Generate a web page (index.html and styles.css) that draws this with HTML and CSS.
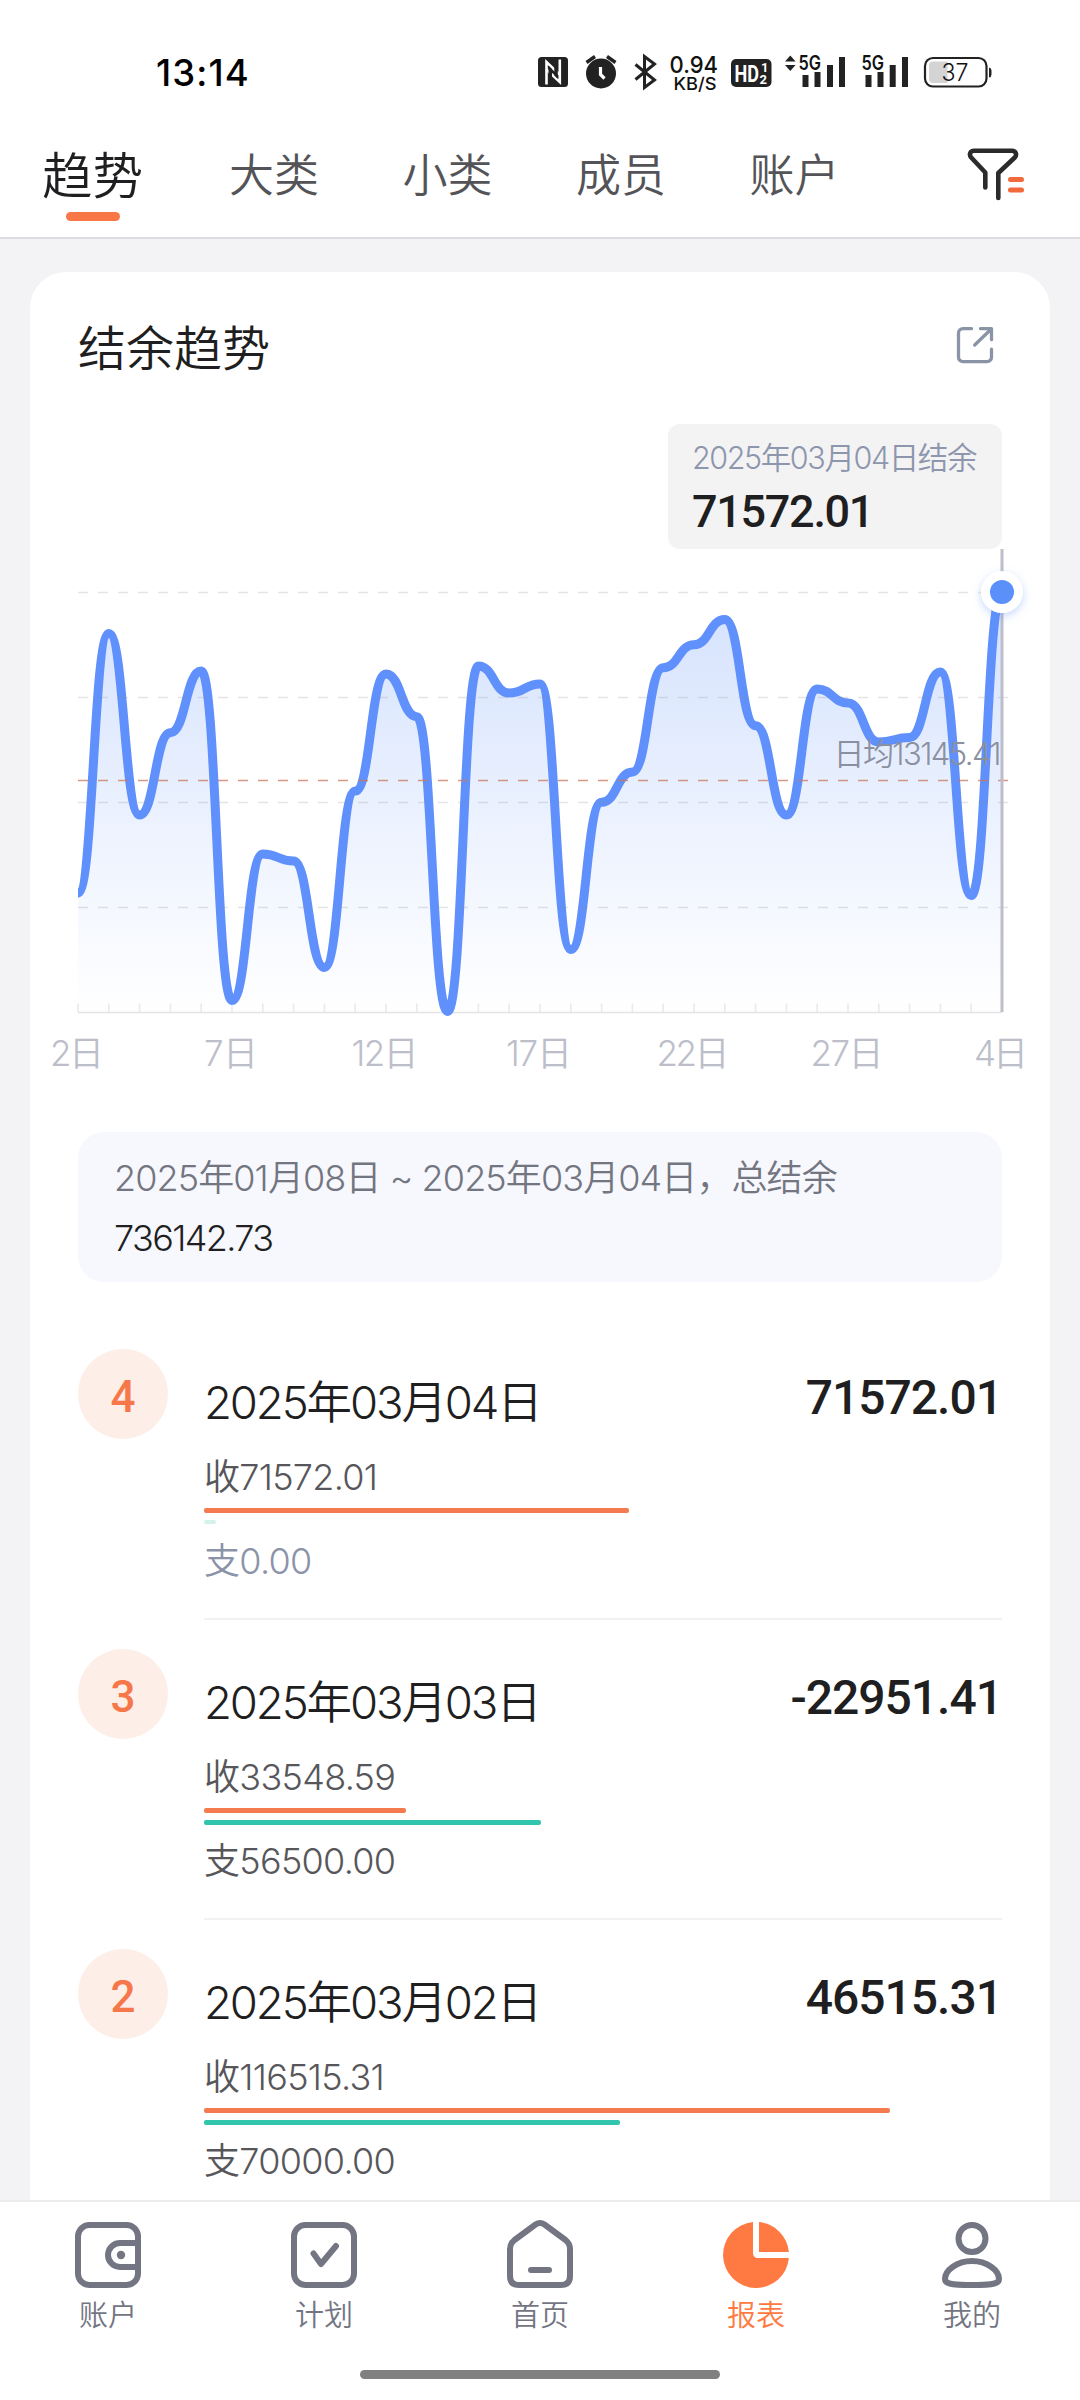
FILE: index.html
```html
<!DOCTYPE html>
<html lang="zh-CN">
<head>
<meta charset="utf-8">
<title>结余趋势</title>
<link rel="stylesheet" href="styles.css">
</head>
<body>
<div class="app">
  <header class="header">
    <div class="status">
      <span class="clock">13:14</span>
      <svg class="status-icons" width="456" height="44" viewBox="536 50 456 44">
        <g fill="#222">
          <rect x="538" y="57" width="30" height="30" rx="3.500"/>
          <path d="M546.500 84.500V62L559.500 74.500" fill="none" stroke="#fff" stroke-width="2.600"/>
          <path d="M559.800 59.500V82L546.500 69.500" fill="none" stroke="#fff" stroke-width="2.600"/>
          <path d="M548.500 65.500l3.500 3.500v14l-3.500 2zM557.800 79l-3.500-3.500v-14l3.500-2z"/>
          <circle cx="601" cy="73.500" r="15"/>
          <path d="M586.500 62.500l8.500-6M615.500 62.500l-8.500-6" stroke="#222" stroke-width="3.400"/>
          <path d="M600.500 67v7.500l4 4" fill="none" stroke="#fff" stroke-width="3.200"/>
          <path d="M635.500 64.500l19 15.500-10 7.500V56.500l10 7.500-19 15.500" fill="none" stroke="#222" stroke-width="3"/>
          <rect x="731" y="59" width="40.500" height="28" rx="5"/>
          <path d="M785 61.500l5.300-6 5.300 6zM785 65l5.300 6 5.300-6z"/>
          <path d="M802.500 75h6v12h-6zM814.500 72h6v15h-6zM827 65h6v22h-6zM839 57h6v30h-6z"/>
          <path d="M865.500 75h6v12h-6zM877.500 72h6v15h-6zM889.700 65h6v22h-6zM902 57h6v30h-6z"/>
          <path d="M989 67.500a3 3 0 0 1 2.500 3v4a3 3 0 0 1-2.500 3z"/>
        </g>
        <path d="M933 61.500h14.500v21.500H933a4 4 0 0 1-4-4V65.500a4 4 0 0 1 4-4z" fill="#d4d4d4"/>
        <rect x="925" y="58" width="61.500" height="28.500" rx="8" fill="none" stroke="#222" stroke-width="2.200"/>
        <g class="status-text">
          <text x="669.500" y="73" font-size="23.500" textLength="48.500" lengthAdjust="spacingAndGlyphs">0.94</text>
          <text x="673.500" y="90" font-size="17.500" textLength="43" lengthAdjust="spacingAndGlyphs">KB/S</text>
          <text class="on-dark" x="734.500" y="81.500" font-size="23" textLength="24.500" lengthAdjust="spacingAndGlyphs">HD</text>
          <text class="on-dark" x="761" y="71.500" font-size="13">1</text>
          <text class="on-dark" x="759.500" y="84" font-size="13">2</text>
          <text x="798.500" y="70" font-size="20" font-weight="600" textLength="22.500" lengthAdjust="spacingAndGlyphs">5G</text>
          <text x="861.500" y="70" font-size="20" font-weight="600" textLength="22.500" lengthAdjust="spacingAndGlyphs">5G</text>
          <text x="941.500" y="81" font-size="24" font-weight="350" textLength="27" lengthAdjust="spacingAndGlyphs">37</text>
        </g>
      </svg>
    </div>
    <nav class="tabs">
      <span class="tab tab-active">趋势</span>
      <span class="tab">大类</span>
      <span class="tab">小类</span>
      <span class="tab">成员</span>
      <span class="tab">账户</span>
      <svg class="filter" width="60" height="56" viewBox="966 147 60 56" fill="none" stroke-width="4.600" stroke-linecap="round" stroke-linejoin="round">
        <path d="M985.300 188.500V173.500L971.200 158.500c-2.500-3-1-6.700 2.800-6.700h38c3.800 0 5.300 3.700 2.800 6.700L998.300 174v25" stroke="#2b2b2d"/>
        <path d="M1010.500 180.500h11M1010.500 191h11" stroke="#f2693c" stroke-width="5"/>
      </svg>
    </nav>
  </header>

  <main class="main">
    <section class="card">
      <div class="card-head">
        <h1 class="title">结余趋势</h1>
        <svg width="38" height="38" viewBox="956 326 38 38" fill="none" stroke="#8a94a6" stroke-width="3.300" stroke-linecap="round" stroke-linejoin="round">
          <path d="M971.500 328.700H963a4.500 4.500 0 0 0-4.500 4.500v24a4.500 4.500 0 0 0 4.500 4.500h24a4.500 4.500 0 0 0 4.500-4.500v-8M980.500 328.700h11v11M991 329.200l-16.300 15.800"/>
        </svg>
      </div>
      <div class="tooltip">
        <div class="tooltip-label">2025年03月04日结余</div>
        <div class="tooltip-value">71572.01</div>
      </div>
      <svg class="chart" width="1020" height="583" viewBox="30 549 1020 583">
        <defs>
          <linearGradient id="area" x1="0" y1="592" x2="0" y2="1012" gradientUnits="userSpaceOnUse">
            <stop offset="0" stop-color="#5b8ff9" stop-opacity=".26"/>
            <stop offset="1" stop-color="#5b8ff9" stop-opacity="0"/>
          </linearGradient>
          <clipPath id="plot"><rect x="78" y="540" width="924" height="500"/></clipPath>
          <filter id="glow" x="-60%" y="-60%" width="220%" height="220%">
            <feDropShadow dx="0" dy="3" stdDeviation="4" flood-color="#5b8ff9" flood-opacity=".35"/>
          </filter>
        </defs>
        <path d="M78 1012.500H1002" stroke="#e4e4e7" stroke-width="1.500"/>
        <path id="ticks" stroke="#e9e9ee" stroke-width="1.500"/>
        <g clip-path="url(#plot)">
          <path id="areaPath" fill="url(#area)"/>
          <path id="linePath" fill="none" stroke="#5f90fb" stroke-width="9"/>
        </g>
        <path d="M78 592.500H1009M78 697.500H1009M78 802.500H1009M78 907.500H1009" stroke="#8c8c94" stroke-opacity=".23" stroke-width="1.600" stroke-dasharray="10 10"/>
        <path d="M78 780.500H1009" stroke="#c9775f" stroke-opacity=".75" stroke-width="1.300" stroke-dasharray="10 10"/>
        <text class="avg" x="833.500" y="764.500" textLength="168" lengthAdjust="spacing">日均13145.41</text>
        <path d="M1002 549V1012" stroke="#bdbec9" stroke-width="3"/>
        <circle cx="1002" cy="592" r="21" fill="#fff" filter="url(#glow)"/>
        <circle cx="1002" cy="592" r="12" fill="#5b8ff9"/>
        <g class="axis" id="axis"></g>
      </svg>
      <div class="summary">
        <div>2025年01月08日 ~ 2025年03月04日，总结余</div>
        <div class="summary-total">736142.73</div>
      </div>

      <ul class="list">
        <li class="row">
          <span class="day">4</span>
          <div class="body">
            <div class="line"><span class="date">2025年03月04日</span><span class="amount">71572.01</span></div>
            <div class="in">收71572.01</div>
            <div class="bar bar-in" style="width:425px"></div>
            <div class="bar bar-none" style="width:12px"></div>
            <div class="out out-zero">支0.00</div>
          </div>
        </li>
        <li class="row">
          <span class="day">3</span>
          <div class="body">
            <div class="line"><span class="date">2025年03月03日</span><span class="amount">-22951.41</span></div>
            <div class="in">收33548.59</div>
            <div class="bar bar-in" style="width:202px"></div>
            <div class="bar bar-out" style="width:337px"></div>
            <div class="out">支56500.00</div>
          </div>
        </li>
        <li class="row">
          <span class="day">2</span>
          <div class="body">
            <div class="line"><span class="date">2025年03月02日</span><span class="amount">46515.31</span></div>
            <div class="in">收116515.31</div>
            <div class="bar bar-in" style="width:686px"></div>
            <div class="bar bar-out" style="width:416px"></div>
            <div class="out">支70000.00</div>
          </div>
        </li>
      </ul>
    </section>
  </main>

  <footer class="footer">
    <nav class="nav">
      <div class="item">
        <svg width="72" height="72" viewBox="72 2218 72 72" fill="none" stroke="#737583" stroke-width="6">
          <rect x="78" y="2224" width="60" height="60" rx="11.500"/>
          <path d="M138 2242H120a12 12 0 0 0 0 24H138"/>
          <circle cx="121" cy="2254" r="4.200" fill="#737583" stroke="none"/>
        </svg>
        <span>账户</span>
      </div>
      <div class="item">
        <svg width="72" height="72" viewBox="288 2218 72 72" fill="none" stroke="#737583" stroke-width="6" stroke-linecap="round" stroke-linejoin="round">
          <rect x="294" y="2224" width="60" height="60" rx="11.500"/>
          <path d="M313.500 2252.500l7.500 10.500 15-18"/>
        </svg>
        <span>计划</span>
      </div>
      <div class="item">
        <svg width="72" height="72" viewBox="504 2218 72 72" fill="none" stroke="#737583" stroke-width="6" stroke-linecap="round">
          <path d="M535.500 2223.500q4.500-3 9 0l21 15.500q4.500 3.500 4.500 9V2275q0 9-9 9H519q-9 0-9-9V2248q0-5.500 4.500-9z"/>
          <path d="M531 2269h18"/>
        </svg>
        <span>首页</span>
      </div>
      <div class="item item-active">
        <svg width="72" height="72" viewBox="720 2218 72 72" fill="#ff7a42">
          <path d="M753 2221.100A33 33 0 1 0 788.900 2257H758q-5 0-5-5z"/>
          <path d="M759 2221.100V2251H788.900A33 33 0 0 0 759 2221.100z"/>
        </svg>
        <span>报表</span>
      </div>
      <div class="item">
        <svg width="72" height="72" viewBox="936 2218 72 72" fill="none" stroke="#737583" stroke-width="6">
          <circle cx="972" cy="2237.500" r="13.500"/>
          <path d="M972 2260c-15 0-27 9.500-27 18 0 4 3.500 6 27 6s27-2 27-6c0-8.500-12-18-27-18z"/>
        </svg>
        <span>我的</span>
      </div>
    </nav>
    <div class="home-bar"></div>
  </footer>
</div>
<script src="chart.js"></script>
</body>
</html>
```
FILE: styles.css
```css
* { box-sizing: border-box; }

body {
  margin: 0;
  font-family: Inter, "Noto Sans CJK SC", sans-serif;
  font-weight: 350;
  color: #1f1f21;
  background: #f3f3f6;
}

.app {
  width: 1080px;
  height: 2400px;
  display: flex;
  flex-direction: column;
  overflow: hidden;
}

.header {
  flex: none;
  height: 239px;
  background: #fff;
  border-bottom: 2px solid #dcdde1;
}

.status {
  height: 145px;
  padding: 50px 88px 0 156px;
  display: flex;
  justify-content: space-between;
}

.clock {
  font-size: 36.5px;
  font-weight: 500;
  line-height: 46px;
  color: #000;
  letter-spacing: 1.1px;
}

.status-icons { overflow: visible; }

.status-text { font-weight: 500; fill: #111; }

.on-dark {
  font-family: Roboto, sans-serif;
  font-weight: 700;
  fill: #fff;
}

.tabs {
  display: flex;
  align-items: center;
  height: 58px;
  padding: 0 54px 0 42px;
}

.tab {
  font-size: 45px;
  line-height: 54px;
  padding-top: 4px;
  color: #545458;
  margin-right: 83.500px;
}

.tab-active {
  position: relative;
  font-size: 50.5px;
  color: #1f1f21;
  margin-right: 86px;
}

.tab-active::after {
  content: "";
  position: absolute;
  left: 24px;
  top: 67px;
  width: 54px;
  height: 9px;
  border-radius: 5px;
  background: #f97746;
}

.filter { margin-left: auto; }

.main {
  flex: 1;
  min-height: 0;
  overflow: hidden;
  padding: 33px 30px 0;
}

.card {
  background: #fff;
  border-radius: 36px 36px 0 0;
  height: 2000px;
}

.card-head {
  display: flex;
  justify-content: space-between;
  height: 152px;
  padding: 54px 56px 0 48px;
}

.title {
  margin: 0;
  font-size: 48px;
  line-height: 46px;
  font-weight: 350;
}

.tooltip {
  width: 334px;
  height: 125px;
  margin-left: auto;
  margin-right: 48px;
  padding: 14px 0 0 24px;
  border-radius: 12px;
  background: #f3f3f4;
}

.tooltip-label {
  font-size: 30.5px;
  line-height: 40px;
  letter-spacing: -1.4px;
  color: #8d96ad;
  white-space: nowrap;
}

.tooltip-value,
.amount,
.day {
  font-family: Roboto, sans-serif;
  font-weight: 500;
}

.tooltip-value {
  font-size: 45px;
  line-height: 68px;
  letter-spacing: -1.3px;
}

.chart { display: block; }

.avg { font-size: 31px; fill: #8b90a0; }

.axis { font-size: 35px; fill: #bcbeca; }

.summary {
  height: 150px;
  margin: 0 48px;
  padding: 16px 36px 0;
  border-radius: 26px;
  background: #f7f8fd;
  font-size: 36px;
  line-height: 60px;
  letter-spacing: -0.9px;
  color: #737580;
  white-space: nowrap;
}

.summary-total {
  color: #1f1f21;
  letter-spacing: -1.6px;
}

.list {
  list-style: none;
  margin: 38px 0 0;
  padding: 0 48px;
}

.row {
  display: flex;
  height: 300px;
}

.day {
  flex: none;
  width: 90px;
  height: 90px;
  margin: 29px 36px 0 0;
  border-radius: 50%;
  background: #feeee8;
  color: #f5774a;
  font-size: 44px;
  line-height: 97px;
  text-align: center;
}

.body {
  flex: 1;
  padding-top: 48px;
  border-bottom: 2px solid #f2f2f4;
}

.line {
  display: flex;
  justify-content: space-between;
  height: 70px;
}

.date {
  font-size: 45.5px;
  line-height: 69px;
  letter-spacing: -2.1px;
}

.amount {
  font-size: 48px;
  line-height: 60px;
  letter-spacing: -1px;
}

.in,
.out {
  font-size: 36px;
  line-height: 50px;
  letter-spacing: -0.7px;
  color: #57575b;
}

.in { height: 70px; padding-top: 14px; }

.out { padding-top: 4px; }

.out-zero { color: #8a93a8; }

.bar {
  height: 5px;
  border-radius: 2px;
  margin-bottom: 7px;
}

.bar-in { background: #f47a50; }
.bar-out { background: #32c5ad; }
.bar-none { background: #d3f2ec; height: 4px; margin-bottom: 8px; }

.footer {
  flex: none;
  height: 200px;
  border-top: 2px solid #ececef;
  background: #fff;
}

.nav {
  display: grid;
  grid-template-columns: repeat(5, 1fr);
  height: 168px;
  padding-top: 17px;
}

.item {
  display: flex;
  flex-direction: column;
  align-items: center;
  font-size: 29px;
  line-height: 46px;
  color: #737583;
}

.item svg { flex: none; margin-bottom: 2px; }

.item-active { color: #ff7a42; }

.home-bar {
  width: 360px;
  height: 9px;
  margin: 0 auto;
  border-radius: 5px;
  background: #808080;
}
```
FILE: chart.js
```js
const LEFT = 78, STEP = 30.8, BASE = 1012;
const ys = [893, 633.5, 815, 732.7, 671, 1000.5, 854, 861, 967.5, 791, 674, 716.7,
  1011.5, 666, 693, 684, 949.5, 802.3, 772, 667.7, 644.7, 619.5, 725.7, 815,
  689, 703, 742, 737.5, 672, 895.5, 592];
const px = i => LEFT + i * STEP;

// Horizontal bezier between neighbouring days
let d = `M${px(0)} ${ys[0]}`;
for (let i = 1; i < ys.length; i++) {
  const mid = (px(i - 1) + px(i)) / 2;
  d += `C${mid} ${ys[i - 1]} ${mid} ${ys[i]} ${px(i)} ${ys[i]}`;
}
document.getElementById("linePath").setAttribute("d", d);
document.getElementById("areaPath").setAttribute("d", `${d}V${BASE}H${LEFT}Z`);
document.getElementById("ticks").setAttribute("d",
  ys.map((_, i) => `M${px(i)} 1003.5V${BASE}`).join(""));

document.getElementById("axis").innerHTML =
  ["2日", "7日", "12日", "17日", "22日", "27日", "4日"].map((label, i) => {
    const w = { "2": 54, "7": 54, "4": 54, "12": 67, "17": 66 }[label.slice(0, -1)] || 73;
    return `<text x="${px(i * 5) - 1 - w / 2}" y="1066" textLength="${w}">${label}</text>`;
  }).join("");
```
